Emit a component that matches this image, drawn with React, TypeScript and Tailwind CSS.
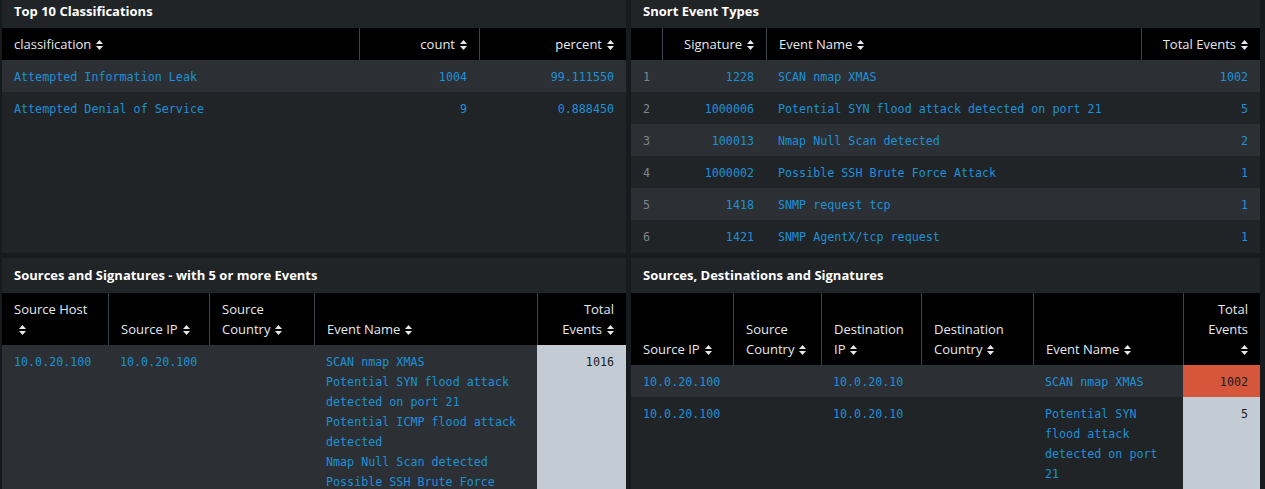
import React from 'react'

const SortIcon = ({ dark = false }: { dark?: boolean }) => (
  <svg width="7" height="10" viewBox="0 0 7 10" className="inline-block ml-[5px] align-[-1px]">
    <path d="M3.5 0 L7 4 L0 4 Z" fill={dark ? '#171d21' : '#e6e9ec'} />
    <path d="M0 6 L7 6 L3.5 10 Z" fill={dark ? '#171d21' : '#e6e9ec'} />
  </svg>
)

const mono = "font-['DejaVu_Sans_Mono',monospace] text-[11.7px]"

type Col = { label: React.ReactNode; w: number; right?: boolean }

const Head = ({ cols }: { cols: Col[] }) => (
  <>
    <colgroup>
      {cols.map((c, i) => (
        <col key={i} style={{ width: c.w }} />
      ))}
    </colgroup>
    <thead>
      <tr className="bg-black">
        {cols.map((c, i) => (
          <th
            key={i}
            className={`align-bottom font-normal px-3 py-[6px] leading-5 text-[13px] text-[#e6e9ec] ${
              i > 0 ? 'border-l border-[#3b4249]' : ''
            } ${c.right ? 'text-right' : 'text-left'}`}
          >
            {c.label}
          </th>
        ))}
      </tr>
    </thead>
  </>
)

const Panel = ({ title, top, children }: { title: string; top?: boolean; children: React.ReactNode }) => (
  <div className="bg-[#212427] overflow-hidden">
    <div
      className={`flex items-center px-3 font-bold text-[13px] text-white ${top ? 'h-[28px] pb-[4px]' : 'h-[35px] pt-[1px]'}`}
    >
      {title}
    </div>
    {children}
  </div>
)

const link = 'text-[#1c90d6]'
const cell = 'px-3 pt-[7px] pb-[5px] leading-5'

export default function App() {
  const classes = [
    ['Attempted Information Leak', '1004', '99.111550'],
    ['Attempted Denial of Service', '9', '0.888450'],
  ]
  const snort = [
    ['1228', 'SCAN nmap XMAS', '1002'],
    ['1000006', 'Potential SYN flood attack detected on port 21', '5'],
    ['100013', 'Nmap Null Scan detected', '2'],
    ['1000002', 'Possible SSH Brute Force Attack', '1'],
    ['1418', 'SNMP request tcp', '1'],
    ['1421', 'SNMP AgentX/tcp request', '1'],
  ]
  const events = [
    'SCAN nmap XMAS',
    'Potential SYN flood attack detected on port 21',
    'Potential ICMP flood attack detected',
    'Nmap Null Scan detected',
    'Possible SSH Brute Force Attack',
    'SNMP request tcp',
  ]

  return (
    <div className="h-[489px] w-[1265px] overflow-hidden bg-[#181b1e] font-['Open_Sans',sans-serif] pl-[2px] pr-[5px]">
      <div className="grid grid-cols-[624px_1fr] gap-x-[5px] gap-y-[5px] grid-rows-[253px_1fr] h-full">
        <Panel title="Top 10 Classifications" top>
          <table className="w-full table-fixed border-separate border-spacing-0">
            <Head
              cols={[
                { label: <>classification<SortIcon /></>, w: 357 },
                { label: <>count<SortIcon /></>, w: 120, right: true },
                { label: <>percent<SortIcon /></>, w: 147, right: true },
              ]}
            />
            <tbody className={mono}>
              {classes.map((r, i) => (
                <tr key={i} className={i % 2 === 0 ? 'bg-[#2c3034]' : ''}>
                  <td className={`${cell} ${link}`}>{r[0]}</td>
                  <td className={`${cell} text-right ${link}`}>{r[1]}</td>
                  <td className={`${cell} text-right ${link}`}>{r[2]}</td>
                </tr>
              ))}
            </tbody>
          </table>
        </Panel>

        <Panel title="Snort Event Types" top>
          <table className="w-full table-fixed border-separate border-spacing-0">
            <Head
              cols={[
                { label: '', w: 31 },
                { label: <>Signature<SortIcon /></>, w: 104, right: true },
                { label: <>Event Name<SortIcon /></>, w: 375 },
                { label: <>Total Events<SortIcon /></>, w: 119, right: true },
              ]}
            />
            <tbody className={mono}>
              {snort.map((r, i) => (
                <tr key={i} className={i % 2 === 0 ? 'bg-[#2c3034]' : ''}>
                  <td className={`${cell} text-[#7d858c]`}>{i + 1}</td>
                  <td className={`${cell} text-right ${link}`}>{r[0]}</td>
                  <td className={`${cell} whitespace-nowrap ${link}`}>{r[1]}</td>
                  <td className={`${cell} text-right ${link}`}>{r[2]}</td>
                </tr>
              ))}
            </tbody>
          </table>
        </Panel>

        <Panel title="Sources and Signatures - with 5 or more Events">
          <table className="w-full table-fixed border-separate border-spacing-0">
            <Head
              cols={[
                { label: <>Source Host<br /><SortIcon /></>, w: 106 },
                { label: <>Source IP<SortIcon /></>, w: 101 },
                { label: <>Source<br />Country<SortIcon /></>, w: 105 },
                { label: <>Event Name<SortIcon /></>, w: 223 },
                { label: <>Total<br />Events<SortIcon /></>, w: 89, right: true },
              ]}
            />
            <tbody className={mono}>
              <tr className="bg-[#2c3034] align-top">
                <td className={`${cell} ${link}`}>10.0.20.100</td>
                <td className={`${cell} ${link}`}>10.0.20.100</td>
                <td className={cell}></td>
                <td className={`${cell} ${link}`}>
                  {events.map((e, i) => (
                    <div key={i}>{e}</div>
                  ))}
                </td>
                <td className={`${cell} text-right bg-[#c3cbd4] text-[#171d21]`}>1016</td>
              </tr>
            </tbody>
          </table>
        </Panel>

        <Panel title="Sources, Destinations and Signatures">
          <table className="w-full table-fixed border-separate border-spacing-0">
            <Head
              cols={[
                { label: <>Source IP<SortIcon /></>, w: 102 },
                { label: <>Source<br />Country<SortIcon /></>, w: 88 },
                { label: <>Destination<br />IP<SortIcon /></>, w: 100 },
                { label: <>Destination<br />Country<SortIcon /></>, w: 112 },
                { label: <>Event Name<SortIcon /></>, w: 150 },
                { label: <>Total<br />Events<br /><SortIcon /></>, w: 77, right: true },
              ]}
            />
            <tbody className={mono}>
              <tr className="bg-[#2c3034] align-top">
                <td className={`${cell} ${link}`}>10.0.20.100</td>
                <td className={cell}></td>
                <td className={`${cell} ${link}`}>10.0.20.10</td>
                <td className={cell}></td>
                <td className={`${cell} ${link}`}>SCAN nmap XMAS</td>
                <td className={`${cell} text-right bg-[#d6563c] text-[#171d21]`}>1002</td>
              </tr>
              <tr className="align-top">
                <td className={`${cell} ${link}`}>10.0.20.100</td>
                <td className={cell}></td>
                <td className={`${cell} ${link}`}>10.0.20.10</td>
                <td className={cell}></td>
                <td className={`${cell} ${link}`}>Potential SYN flood attack detected on port 21</td>
                <td className={`${cell} text-right bg-[#c3cbd4] text-[#171d21]`}>5</td>
              </tr>
            </tbody>
          </table>
        </Panel>
      </div>
    </div>
  )
}
